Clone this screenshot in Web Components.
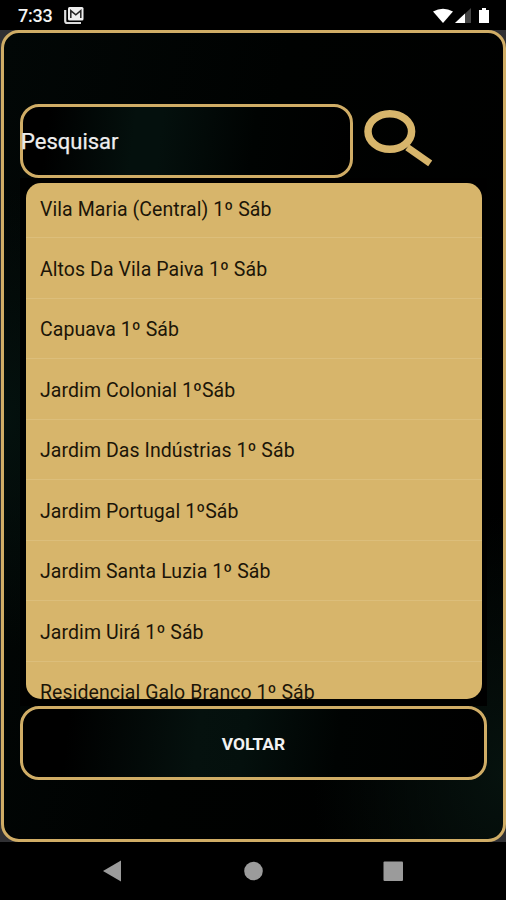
<!DOCTYPE html>
<html lang="pt-BR">
<head>
<meta charset="utf-8">
<title>Pesquisar</title>
<style>
html,body{margin:0;height:100%;background:#000;overflow:hidden}
body{font-family:Roboto,"Liberation Sans",sans-serif;--gold:#d7b56b;--line:#d0ad66}
</style>
</head>
<body>
<app-screen>
  <status-bar slot="top">7:33</status-bar>
  <search-field>Pesquisar</search-field>
  <place-list>
    <place-row>Vila Maria (Central) 1º Sáb</place-row>
    <place-row>Altos Da Vila Paiva 1º Sáb</place-row>
    <place-row>Capuava 1º Sáb</place-row>
    <place-row>Jardim Colonial 1ºSáb</place-row>
    <place-row>Jardim Das Indústrias 1º Sáb</place-row>
    <place-row>Jardim Portugal 1ºSáb</place-row>
    <place-row>Jardim Santa Luzia 1º Sáb</place-row>
    <place-row>Jardim Uirá 1º Sáb</place-row>
    <place-row>Residencial Galo Branco 1º Sáb</place-row>
  </place-list>
  <back-button>VOLTAR</back-button>
  <nav-bar slot="bottom"></nav-bar>
</app-screen>
<script>
const define = (name, html) => customElements.define(name, class extends HTMLElement {
  constructor() {
    super();
    const t = document.createElement('template');
    t.innerHTML = html;
    this.attachShadow({mode: 'open'}).append(t.content.cloneNode(true));
  }
});

define('app-screen', `
<style>
:host{display:flex;flex-direction:column;width:506px;height:900px;background:#000}
.stage{height:812px;background:#303033}
main{box-sizing:border-box;height:812px;margin-left:1px;padding:71px 16px 0;border:3px solid var(--line);border-radius:18px;
background:radial-gradient(ellipse 130px 230px at 0 48%,#04110e,transparent),radial-gradient(ellipse 190px 260px at 100% 92%,#06120e,transparent),linear-gradient(100deg,#020706,#000201 45%,#000)}
</style>
<slot name="top"></slot>
<div class="stage"><main><slot></slot></main></div>
<slot name="bottom"></slot>`);

define('status-bar', `
<style>
:host{display:flex;height:30px;box-sizing:border-box;padding:1px 15px 0 18px;align-items:center;color:#f4f4f4;font-size:18px;font-weight:500;letter-spacing:-.25px}
svg{display:block}.mail{margin-left:11.5px}.right{margin-left:auto}
</style>
<slot></slot>
<svg class="mail" width="20" height="18" viewBox="0 0 20 18"><path d="M1.2 3v11q0 2 2 2H17" fill="none" stroke="#ddd" stroke-width="2.2"/><rect x="4" y="0" width="15.5" height="13.5" rx="1.5" fill="#eee"/><path d="M6.8 11V3.6l5 4.2 5-4.2V11" fill="none" stroke="#222" stroke-width="1.5"/></svg>
<svg class="right" width="58" height="18" viewBox="0 0 58 18"><path d="M0 4.5Q10-1 20 4.5L10 16Z" fill="#fff"/><path d="M38 1v15H22Z" fill="#444"/><path d="M32 6.6V16H22Z" fill="#fff"/><path d="M46 3h3V1h4v2h3v13H46Z" fill="#fff"/></svg>`);

define('search-field', `
<style>
:host{display:flex;height:74px}
.box{box-sizing:border-box;width:333px;height:74px;border:3px solid var(--line);border-radius:19px;display:flex;align-items:center;color:#eee;font-size:22px;
background:linear-gradient(97deg,#000 8%,#04100d 34%,#04100d 42%,#000302 70%,#000)}
.label{margin-left:-2px;padding-top:1px;-webkit-text-stroke:.25px #eee}
svg{margin:5px 0 0 11px}
</style>
<div class="box"><span class="label"><slot></slot></span></div>
<svg width="70" height="58" viewBox="0 0 70 58" fill="none" stroke="#d7b56b"><ellipse cx="25.8" cy="22.5" rx="21.8" ry="17.8" stroke-width="7.5"/><path d="M43.3 38.3L66.2 54.4" stroke-width="7"/></svg>`);

define('place-list', `
<style>
:host{display:block;box-sizing:border-box;height:528px;padding:5px 5px 7px 6px;background:#000;width:467px}
.sheet{height:516px;overflow:hidden;border-radius:15px;background:var(--gold)}
.rows{margin-top:-5px}
</style>
<div class="sheet"><div class="rows"><slot></slot></div></div>`);

define('place-row', `
<style>
:host{display:flex;align-items:center;box-sizing:border-box;height:60.48px;padding:2.6px 0 0 14px;border-bottom:1px solid #dcbe7b;color:#1c1508;font-size:19.5px;letter-spacing:.07px;white-space:nowrap}
</style>
<slot></slot>`);

define('back-button', `
<style>
:host{display:flex;align-items:center;justify-content:center;box-sizing:border-box;width:467px;height:74px;padding-top:1px;border:3px solid var(--line);border-radius:19px;color:#f2f2f2;font-size:17.4px;font-weight:700;
background:linear-gradient(97deg,#000 10%,#05110e 38%,#04100d 48%,#000302 68%,#000)}
</style>
<slot></slot>`);

define('nav-bar', `
<style>
:host{display:block;height:58px}
svg{display:block}
</style>
<svg width="506" height="58" viewBox="0 0 506 58" fill="#9b9b9b"><path d="M103 29L121 18.5V39.5Z"/><circle cx="253.5" cy="29" r="9.3"/><rect x="383.5" y="19.5" width="19.5" height="19.5" rx="1"/></svg>`);
</script>
</body>
</html>
